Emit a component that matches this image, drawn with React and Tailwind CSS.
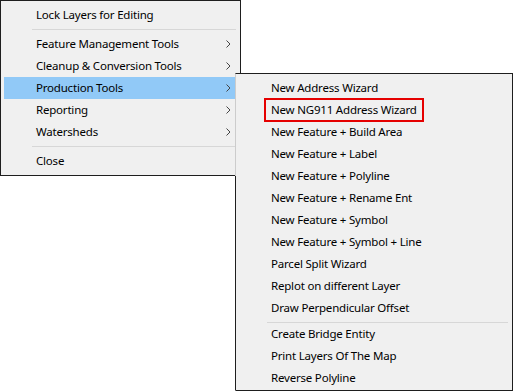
const mainItems = [
  { type: 'item', label: 'Lock Layers for Editing' },
  { type: 'sep' },
  { type: 'item', label: 'Feature Management Tools', sub: true },
  { type: 'item', label: 'Cleanup & Conversion Tools', sub: true },
  { type: 'item', label: 'Production Tools', sub: true, active: true },
  { type: 'item', label: 'Reporting', sub: true },
  { type: 'item', label: 'Watersheds', sub: true },
  { type: 'sep' },
  { type: 'item', label: 'Close' },
]

const subItems = [
  { type: 'item', label: 'New Address Wizard' },
  { type: 'item', label: 'New NG911 Address Wizard', marked: true },
  { type: 'item', label: 'New Feature + Build Area' },
  { type: 'item', label: 'New Feature + Label' },
  { type: 'item', label: 'New Feature + Polyline' },
  { type: 'item', label: 'New Feature + Rename Ent' },
  { type: 'item', label: 'New Feature + Symbol' },
  { type: 'item', label: 'New Feature + Symbol + Line' },
  { type: 'item', label: 'Parcel Split Wizard' },
  { type: 'item', label: 'Replot on different Layer' },
  { type: 'item', label: 'Draw Perpendicular Offset' },
  { type: 'sep', tight: true },
  { type: 'item', label: 'Create Bridge Entity' },
  { type: 'item', label: 'Print Layers Of The Map' },
  { type: 'item', label: 'Reverse Polyline' },
]

function Chevron() {
  return (
    <svg width="5" height="8" viewBox="0 0 5 8" className="mr-[6px]">
      <path d="M0.5 0.5 L4 4 L0.5 7.5" fill="none" stroke="#444" strokeWidth="1" />
    </svg>
  )
}

function MenuRow({ item }) {
  if (item.type === 'sep') {
    return (
      <div
        className={`h-px bg-[#d7d7d7] ml-[28px] mr-px ${
          item.tight ? 'mt-[3px] mb-0' : 'my-[3px]'
        }`}
      />
    )
  }
  return (
    <div
      className={`h-[22px] flex items-center justify-between pl-[32px] ${
        item.active ? 'bg-[#91c9f7]' : ''
      }`}
    >
      {item.marked ? (
        <span className="relative">
          {item.label}
          <span className="absolute -left-[7px] -right-[7px] -top-[3px] -bottom-[3px] border-2 border-[#e50000]" />
        </span>
      ) : (
        <span>{item.label}</span>
      )}
      {item.sub && <Chevron />}
    </div>
  )
}

export default function App() {
  return (
    <div
      className="relative w-[514px] h-[392px] bg-white text-[11.5px] tracking-[-0.2px] text-black"
      style={{ fontFamily: '"Segoe UI", "Noto Sans", sans-serif' }}
    >
      <div className="w-[241px] border border-[#1e1e1e] bg-[#f0f0f0] p-[3px]">
        {mainItems.map((item, i) => (
          <MenuRow key={i} item={item} />
        ))}
      </div>

      <div className="absolute left-[235px] top-[73px] w-[278px] border border-[#1e1e1e] border-l-[#cccccc] bg-[#f0f0f0] px-[3px] pt-[3px] pb-px">
        <div className="absolute -left-px top-[102px] bottom-0 w-px bg-[#1e1e1e]" />
        {subItems.map((item, i) => (
          <MenuRow key={i} item={item} />
        ))}
      </div>
    </div>
  )
}
